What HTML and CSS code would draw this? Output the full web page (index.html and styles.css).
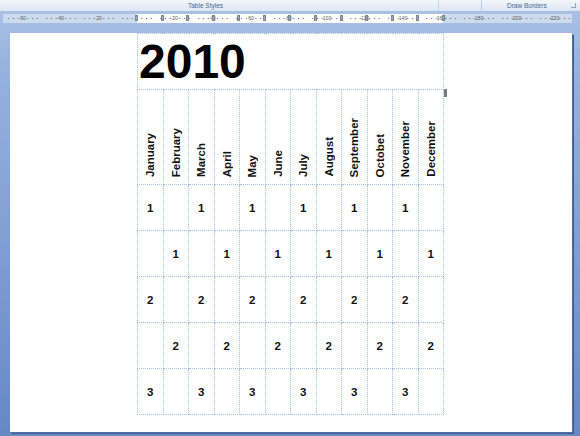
FILE: index.html
```html
<!DOCTYPE html>
<html lang="en">
<head>
  <meta charset="UTF-8">
  <title>2010 Calendar - Word</title>
  <link rel="stylesheet" href="styles.css">
</head>
<body>

  <div class="ribbon">
    <div class="grp grp-styles"><span>Table Styles</span></div>
    <div class="grp grp-gap"></div>
    <div class="grp grp-borders"><span>Draw Borders</span><b class="launcher"></b></div>
  </div>

  <div class="ruler">
    <div class="scale">
      <span class="rc"><i class="t"></i></span>
      <span class="rc"><i class="n">60</i></span>
      <span class="rc"><i class="t"></i></span>
      <span class="rc"><i class="n">40</i></span>
      <span class="rc"><i class="t"></i></span>
      <span class="rc"><i class="n">20</i></span>
      <span class="rc"><i class="t"></i></span>
      <span class="rc"><i></i></span>
      <span class="rc"><i class="t"></i></span>
      <span class="rc"><i class="n">20</i></span>
      <span class="rc"><i class="t"></i></span>
      <span class="rc"><i class="n">40</i></span>
      <span class="rc"><i class="t"></i></span>
      <span class="rc"><i class="n">60</i></span>
      <span class="rc"><i class="t"></i></span>
      <span class="rc"><i class="n">80</i></span>
      <span class="rc"><i class="t"></i></span>
      <span class="rc"><i class="n">100</i></span>
      <span class="rc"><i class="t"></i></span>
      <span class="rc"><i class="n">120</i></span>
      <span class="rc"><i class="t"></i></span>
      <span class="rc"><i class="n">140</i></span>
      <span class="rc"><i class="t"></i></span>
      <span class="rc"><i class="n">160</i></span>
      <span class="rc"><i class="t"></i></span>
      <span class="rc"><i class="n">180</i></span>
      <span class="rc"><i class="t"></i></span>
      <span class="rc"><i class="n">200</i></span>
      <span class="rc"><i class="t"></i></span>
      <span class="rc"><i class="n">220</i></span>
      <span class="rc"><i class="t"></i></span>
    </div>
    <div class="cols">
      <span></span><span></span><span></span><span></span><span></span><span></span>
      <span></span><span></span><span></span><span></span><span></span><span></span>
      <span class="end"></span>
    </div>
  </div>

  <div class="workspace">
    <div class="page">
      <table class="cal">
        <tr class="title-row">
          <td colspan="12" class="year">2010</td>
        </tr>
        <tr class="month-row">
          <td><span class="mo">January</span></td>
          <td><span class="mo">February</span></td>
          <td><span class="mo">March</span></td>
          <td><span class="mo">April</span></td>
          <td><span class="mo">May</span></td>
          <td><span class="mo">June</span></td>
          <td><span class="mo">July</span></td>
          <td><span class="mo">August</span></td>
          <td><span class="mo">September</span></td>
          <td><span class="mo">Octobet</span></td>
          <td><span class="mo">November</span></td>
          <td><span class="mo">December</span></td>
        </tr>
        <tr class="day-row">
          <td>1</td><td></td><td>1</td><td></td><td>1</td><td></td>
          <td>1</td><td></td><td>1</td><td></td><td>1</td><td></td>
        </tr>
        <tr class="day-row">
          <td></td><td>1</td><td></td><td>1</td><td></td><td>1</td>
          <td></td><td>1</td><td></td><td>1</td><td></td><td>1</td>
        </tr>
        <tr class="day-row">
          <td>2</td><td></td><td>2</td><td></td><td>2</td><td></td>
          <td>2</td><td></td><td>2</td><td></td><td>2</td><td></td>
        </tr>
        <tr class="day-row">
          <td></td><td>2</td><td></td><td>2</td><td></td><td>2</td>
          <td></td><td>2</td><td></td><td>2</td><td></td><td>2</td>
        </tr>
        <tr class="day-row">
          <td>3</td><td></td><td>3</td><td></td><td>3</td><td></td>
          <td>3</td><td></td><td>3</td><td></td><td>3</td><td></td>
        </tr>
      </table>
      <div class="row-end"></div>
    </div>
  </div>

</body>
</html>
```

FILE: styles.css
```css
body {
  margin: 0;
  width: 580px;
  height: 436px;
  overflow: hidden;
  font-family: "Liberation Sans", Arial, sans-serif;
  background: linear-gradient(#afc5e8 0, #97b3de 60px, #7898cf 300px, #6688c3 436px);
}

/* ribbon strip */
.ribbon {
  display: flex;
  height: 11px;
  border-bottom: 1px solid #a9bfdf;
  background: linear-gradient(#f3f7fc, #dbe6f5);
  font-size: 6.5px;
  line-height: 11px;
  color: #4a6694;
  white-space: nowrap;
}

.grp-styles {
  width: 438px;
  padding-left: 188px;
  box-sizing: border-box;
}

.grp-gap {
  width: 44px;
  border-left: 1px solid #c8d6ea;
  border-right: 1px solid #b9cbe4;
  box-sizing: border-box;
}

.grp-borders {
  flex: 1;
  display: flex;
  padding-left: 25px;
}

.launcher {
  margin: 3px 0 0 auto;
  margin-right: 4px;
  width: 4px;
  height: 4px;
  border-right: 1px solid #8ea5c6;
  border-bottom: 1px solid #8ea5c6;
}

/* ruler */
.ruler {
  position: relative;
  margin: 2px 0 0 3px;
  width: 569px;
  height: 9px;
  overflow: hidden;
  background: linear-gradient(to right, #cddbef 0 134px, #fff 134px 440px, #cddbef 440px);
}

.scale {
  display: flex;
  margin-left: 1px;
  height: 9px;
}

.rc {
  flex: 0 0 19px;
  display: flex;
  align-items: center;
  padding: 0 2px;
  box-sizing: border-box;
  background-image: radial-gradient(circle, #707070 0 0.6px, transparent 1px);
  background-size: 4.75px 100%;
  background-position: -2.375px center;
  background-repeat: repeat-x;
  background-clip: content-box;
}

.rc i {
  width: 0;
  margin-left: -2px;
  display: flex;
  justify-content: center;
  font-style: normal;
  font-size: 5px;
  line-height: 9px;
  color: #555;
  white-space: nowrap;
}

.rc i.t::before {
  content: "";
  width: 1px;
  height: 3px;
  background: #666;
}

.cols {
  position: absolute;
  left: 132px;
  top: 1px;
  display: flex;
}

.cols span {
  flex: 0 0 25.58px;
}

.cols span::before {
  content: "";
  display: block;
  width: 3px;
  height: 6px;
  background: #9aa3b0;
  border: 1px solid #7d8693;
  box-sizing: border-box;
}

.cols span.end {
  flex-basis: 3px;
}

/* document */
.workspace {
  padding: 10px 0 0 10px;
}

.page {
  display: flex;
  align-items: flex-start;
  width: 562px;
  height: 399px;
  padding-left: 127px;
  box-sizing: border-box;
  background: #fff;
  box-shadow: 1px 1px 0 #51709e, 2px 2px 0 #3f5e8e;
}

.cal {
  border-collapse: collapse;
  table-layout: fixed;
  width: 307px;
}

.cal td {
  border: 1px dotted #a3c1e6;
  padding: 0;
  text-align: center;
  vertical-align: middle;
  font-size: 11.5px;
  font-weight: bold;
  color: #111;
}

.title-row {
  height: 55px;
}

.cal td.year {
  text-align: left;
  vertical-align: top;
  padding-left: 1px;
  font-size: 48px;
  line-height: 55px;
  color: #000;
}

.month-row {
  height: 95px;
}

.month-row td {
  vertical-align: bottom;
  padding-bottom: 5px;
}

.mo {
  display: inline-block;
  writing-mode: vertical-rl;
  transform: rotate(180deg);
  line-height: 14px;
}

.day-row {
  height: 46px;
}

.row-end {
  width: 3px;
  height: 8px;
  margin-top: 56px;
  background: #7b7b7b;
}
```
